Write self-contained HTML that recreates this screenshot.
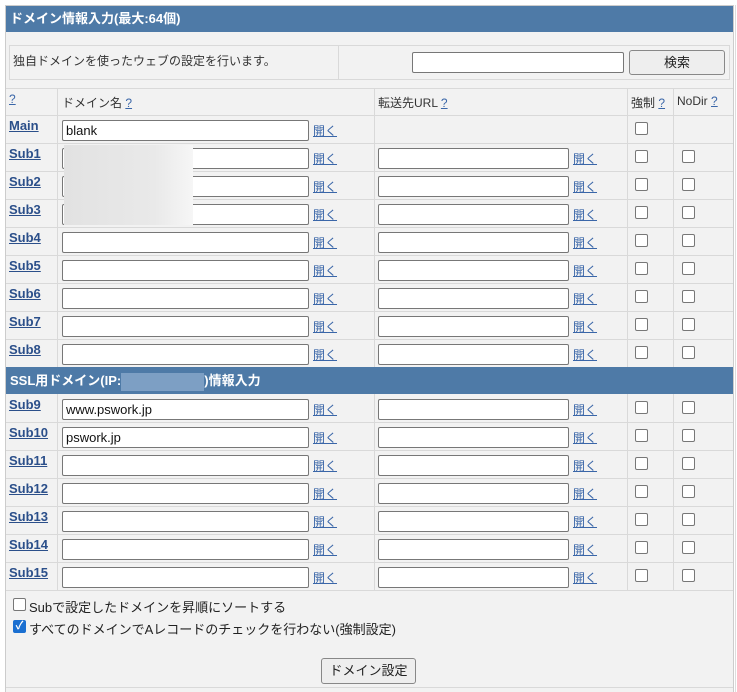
<!DOCTYPE html>
<html><head><meta charset="utf-8"><style>
*{box-sizing:border-box}
body{margin:0;width:737px;height:692px;background:#fff;font-family:"Liberation Sans","Noto Sans CJK JP",sans-serif;font-size:13px;color:#333;position:relative;overflow:hidden}
.abs{position:absolute}
#frame{left:5px;top:5px;width:729px;height:687px;border:1px solid #ccc;border-bottom:none;background:#f2f2f2}
#outer2{left:735px;top:5px;width:1px;height:687px;background:#ddd}
.bar{position:absolute;left:6px;width:727px;background:#4e7aa7;color:#fff;font-weight:bold;font-size:13px;padding-left:4px}
.hl{position:absolute;background:#d9d9d9}
.lbl{position:absolute;left:9px;font-weight:bold;font-size:13px;color:#2b4f8a;text-decoration:underline}
.in{position:absolute;height:21px;background:#fff;border:1px solid #777;border-radius:2px;font-size:13px;padding:2px 3px;color:#111;line-height:15px}
.op{position:absolute;font-size:12px;color:#3a66a8;text-decoration:underline}
.cb{position:absolute;width:13px;height:13px;border:1px solid #777;border-radius:2px;background:#fff}
.row{position:absolute;left:0;width:737px;height:28px}
</style></head><body>
<div id="frame" class="abs"></div>
<div id="outer2" class="abs"></div>
<div class="bar" style="top:6px;height:26px;line-height:26px">ドメイン情報入力(最大:64個)</div>
<div class="abs" style="left:9px;top:45px;width:721px;height:35px;border:1px solid #d9d9d9"></div>
<div class="abs" style="left:338px;top:46px;width:1px;height:33px;background:#d9d9d9"></div>
<div class="abs" style="left:13px;top:52px;font-size:12px">独自ドメインを使ったウェブの設定を行います。</div>
<div class="in" style="left:412px;top:52px;width:212px;height:21px"></div>
<div class="abs" style="left:629px;top:50px;width:96px;height:25px;border:1px solid #888;border-radius:3px;background:#eee;text-align:center;line-height:23px;font-size:13px;color:#222">検索</div>
<div class="hl" style="left:6px;top:88px;width:727px;height:1px"></div>
<div class="hl" style="left:57px;top:88px;width:1px;height:279px"></div>
<div class="hl" style="left:374px;top:88px;width:1px;height:279px"></div>
<div class="hl" style="left:627px;top:88px;width:1px;height:279px"></div>
<div class="hl" style="left:673px;top:88px;width:1px;height:279px"></div>
<div class="hl" style="left:57px;top:394px;width:1px;height:196px"></div>
<div class="hl" style="left:374px;top:394px;width:1px;height:196px"></div>
<div class="hl" style="left:627px;top:394px;width:1px;height:196px"></div>
<div class="hl" style="left:673px;top:394px;width:1px;height:196px"></div>
<div class="hl" style="left:6px;top:115px;width:727px;height:1px"></div>
<div class="hl" style="left:6px;top:143px;width:727px;height:1px"></div>
<div class="hl" style="left:6px;top:171px;width:727px;height:1px"></div>
<div class="hl" style="left:6px;top:199px;width:727px;height:1px"></div>
<div class="hl" style="left:6px;top:227px;width:727px;height:1px"></div>
<div class="hl" style="left:6px;top:255px;width:727px;height:1px"></div>
<div class="hl" style="left:6px;top:283px;width:727px;height:1px"></div>
<div class="hl" style="left:6px;top:311px;width:727px;height:1px"></div>
<div class="hl" style="left:6px;top:339px;width:727px;height:1px"></div>
<div class="hl" style="left:6px;top:422px;width:727px;height:1px"></div>
<div class="hl" style="left:6px;top:450px;width:727px;height:1px"></div>
<div class="hl" style="left:6px;top:478px;width:727px;height:1px"></div>
<div class="hl" style="left:6px;top:506px;width:727px;height:1px"></div>
<div class="hl" style="left:6px;top:534px;width:727px;height:1px"></div>
<div class="hl" style="left:6px;top:562px;width:727px;height:1px"></div>
<div class="hl" style="left:6px;top:590px;width:727px;height:1px"></div>
<div class="hl" style="left:6px;top:687px;width:727px;height:1px"></div>
<div class="op" style="left:9px;top:92px">?</div>
<div class="abs" style="left:62px;top:94px;font-size:12px">ドメイン名 <span class="op" style="position:static">?</span></div>
<div class="abs" style="left:378px;top:94px;font-size:12px">転送先URL <span class="op" style="position:static">?</span></div>
<div class="abs" style="left:631px;top:94px;font-size:12px">強制 <span class="op" style="position:static">?</span></div>
<div class="abs" style="left:677px;top:94px;font-size:12px">NoDir <span class="op" style="position:static">?</span></div>
<div class="row" style="top:115px"><div class="lbl" style="top:3px">Main</div><div class="in" style="left:62px;top:5px;width:247px">blank</div><div class="op" style="left:313px;top:7px">開く</div><div class="cb" style="left:635px;top:7px"></div></div>
<div class="row" style="top:143px"><div class="lbl" style="top:3px">Sub1</div><div class="in" style="left:62px;top:5px;width:247px"></div><div class="op" style="left:313px;top:7px">開く</div><div class="in" style="left:378px;top:5px;width:191px"></div><div class="op" style="left:573px;top:7px">開く</div><div class="cb" style="left:635px;top:7px"></div><div class="cb" style="left:682px;top:7px"></div></div>
<div class="row" style="top:171px"><div class="lbl" style="top:3px">Sub2</div><div class="in" style="left:62px;top:5px;width:247px"></div><div class="op" style="left:313px;top:7px">開く</div><div class="in" style="left:378px;top:5px;width:191px"></div><div class="op" style="left:573px;top:7px">開く</div><div class="cb" style="left:635px;top:7px"></div><div class="cb" style="left:682px;top:7px"></div></div>
<div class="row" style="top:199px"><div class="lbl" style="top:3px">Sub3</div><div class="in" style="left:62px;top:5px;width:247px"></div><div class="op" style="left:313px;top:7px">開く</div><div class="in" style="left:378px;top:5px;width:191px"></div><div class="op" style="left:573px;top:7px">開く</div><div class="cb" style="left:635px;top:7px"></div><div class="cb" style="left:682px;top:7px"></div></div>
<div class="abs" style="left:64px;top:145px;width:129px;height:80px;background:linear-gradient(90deg,#e2e2e2,#e9e9e9 70%,#f6f6f6)"></div>
<div class="row" style="top:227px"><div class="lbl" style="top:3px">Sub4</div><div class="in" style="left:62px;top:5px;width:247px"></div><div class="op" style="left:313px;top:7px">開く</div><div class="in" style="left:378px;top:5px;width:191px"></div><div class="op" style="left:573px;top:7px">開く</div><div class="cb" style="left:635px;top:7px"></div><div class="cb" style="left:682px;top:7px"></div></div>
<div class="row" style="top:255px"><div class="lbl" style="top:3px">Sub5</div><div class="in" style="left:62px;top:5px;width:247px"></div><div class="op" style="left:313px;top:7px">開く</div><div class="in" style="left:378px;top:5px;width:191px"></div><div class="op" style="left:573px;top:7px">開く</div><div class="cb" style="left:635px;top:7px"></div><div class="cb" style="left:682px;top:7px"></div></div>
<div class="row" style="top:283px"><div class="lbl" style="top:3px">Sub6</div><div class="in" style="left:62px;top:5px;width:247px"></div><div class="op" style="left:313px;top:7px">開く</div><div class="in" style="left:378px;top:5px;width:191px"></div><div class="op" style="left:573px;top:7px">開く</div><div class="cb" style="left:635px;top:7px"></div><div class="cb" style="left:682px;top:7px"></div></div>
<div class="row" style="top:311px"><div class="lbl" style="top:3px">Sub7</div><div class="in" style="left:62px;top:5px;width:247px"></div><div class="op" style="left:313px;top:7px">開く</div><div class="in" style="left:378px;top:5px;width:191px"></div><div class="op" style="left:573px;top:7px">開く</div><div class="cb" style="left:635px;top:7px"></div><div class="cb" style="left:682px;top:7px"></div></div>
<div class="row" style="top:339px"><div class="lbl" style="top:3px">Sub8</div><div class="in" style="left:62px;top:5px;width:247px"></div><div class="op" style="left:313px;top:7px">開く</div><div class="in" style="left:378px;top:5px;width:191px"></div><div class="op" style="left:573px;top:7px">開く</div><div class="cb" style="left:635px;top:7px"></div><div class="cb" style="left:682px;top:7px"></div></div>
<div class="bar" style="top:367px;height:27px;line-height:27px">SSL用ドメイン(IP:<span style="display:inline-block;width:83px;height:18px;vertical-align:middle;background:#7d9fc4"></span>)情報入力</div>
<div class="row" style="top:394px"><div class="lbl" style="top:3px">Sub9</div><div class="in" style="left:62px;top:5px;width:247px">www.pswork.jp</div><div class="op" style="left:313px;top:7px">開く</div><div class="in" style="left:378px;top:5px;width:191px"></div><div class="op" style="left:573px;top:7px">開く</div><div class="cb" style="left:635px;top:7px"></div><div class="cb" style="left:682px;top:7px"></div></div>
<div class="row" style="top:422px"><div class="lbl" style="top:3px">Sub10</div><div class="in" style="left:62px;top:5px;width:247px">pswork.jp</div><div class="op" style="left:313px;top:7px">開く</div><div class="in" style="left:378px;top:5px;width:191px"></div><div class="op" style="left:573px;top:7px">開く</div><div class="cb" style="left:635px;top:7px"></div><div class="cb" style="left:682px;top:7px"></div></div>
<div class="row" style="top:450px"><div class="lbl" style="top:3px">Sub11</div><div class="in" style="left:62px;top:5px;width:247px"></div><div class="op" style="left:313px;top:7px">開く</div><div class="in" style="left:378px;top:5px;width:191px"></div><div class="op" style="left:573px;top:7px">開く</div><div class="cb" style="left:635px;top:7px"></div><div class="cb" style="left:682px;top:7px"></div></div>
<div class="row" style="top:478px"><div class="lbl" style="top:3px">Sub12</div><div class="in" style="left:62px;top:5px;width:247px"></div><div class="op" style="left:313px;top:7px">開く</div><div class="in" style="left:378px;top:5px;width:191px"></div><div class="op" style="left:573px;top:7px">開く</div><div class="cb" style="left:635px;top:7px"></div><div class="cb" style="left:682px;top:7px"></div></div>
<div class="row" style="top:506px"><div class="lbl" style="top:3px">Sub13</div><div class="in" style="left:62px;top:5px;width:247px"></div><div class="op" style="left:313px;top:7px">開く</div><div class="in" style="left:378px;top:5px;width:191px"></div><div class="op" style="left:573px;top:7px">開く</div><div class="cb" style="left:635px;top:7px"></div><div class="cb" style="left:682px;top:7px"></div></div>
<div class="row" style="top:534px"><div class="lbl" style="top:3px">Sub14</div><div class="in" style="left:62px;top:5px;width:247px"></div><div class="op" style="left:313px;top:7px">開く</div><div class="in" style="left:378px;top:5px;width:191px"></div><div class="op" style="left:573px;top:7px">開く</div><div class="cb" style="left:635px;top:7px"></div><div class="cb" style="left:682px;top:7px"></div></div>
<div class="row" style="top:562px"><div class="lbl" style="top:3px">Sub15</div><div class="in" style="left:62px;top:5px;width:247px"></div><div class="op" style="left:313px;top:7px">開く</div><div class="in" style="left:378px;top:5px;width:191px"></div><div class="op" style="left:573px;top:7px">開く</div><div class="cb" style="left:635px;top:7px"></div><div class="cb" style="left:682px;top:7px"></div></div>
<div class="cb" style="left:13px;top:598px"></div>
<div class="abs" style="left:29px;top:597px;font-size:13px;color:#222">Subで設定したドメインを昇順にソートする</div>
<div class="abs" style="left:13px;top:620px;width:13px;height:13px;border-radius:2px;background:#1a6fd1;color:#fff;font-size:11px;line-height:13px;text-align:center;font-weight:bold">✓</div>
<div class="abs" style="left:29px;top:619px;font-size:13px;color:#222">すべてのドメインでAレコードのチェックを行わない(強制設定)</div>
<div class="abs" style="left:321px;top:658px;width:95px;height:26px;border:1px solid #888;border-radius:3px;background:#eee;text-align:center;line-height:24px;font-size:13px;color:#222">ドメイン設定</div>
</body></html>
